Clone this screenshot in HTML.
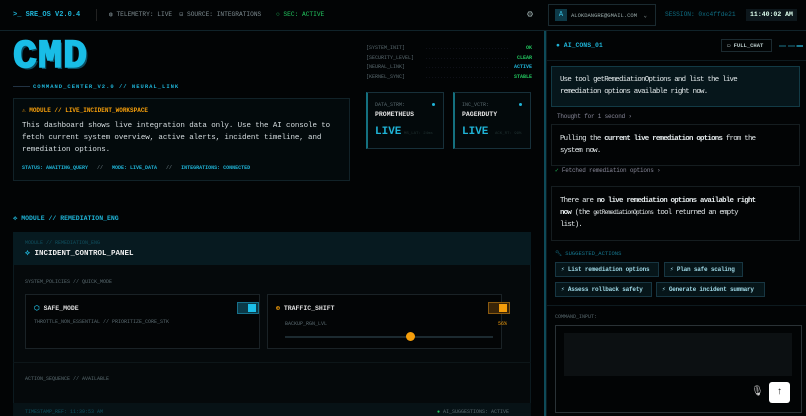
<!DOCTYPE html>
<html><head><meta charset="utf-8"><style>
*{box-sizing:border-box;margin:0;padding:0}
body{width:806px;height:416px;overflow:hidden;background:#020405;font-family:"Liberation Mono",monospace;color:#cfd8dc;position:relative}
.a{position:absolute;white-space:nowrap}
.t6{font-size:6px}.t5{font-size:5px}
.cy{color:#1fb3d6}.dim{color:#5a6a70}.gr{color:#22c55e}.or{color:#f59e0b}
.bx{position:absolute;border:1px solid #17303a}
.chip{position:absolute;height:15px;border:1px solid #173642;background:#061519;color:#9fd8e6;font-size:6px;letter-spacing:-0.2px;font-weight:bold;line-height:13px;padding-left:5px;white-space:nowrap}
.ct{font-size:7.4px;letter-spacing:-0.75px;line-height:12px;color:#e4eaec}
</style></head><body>
<!-- header -->
<div class="a" style="left:0;top:30px;width:806px;height:1px;background:#10232a"></div>
<div class="a cy" style="left:13px;top:11px;font-size:7px;font-weight:bold">&gt;_ SRE_OS V2.0.4</div>
<div class="a" style="left:96px;top:9px;width:1px;height:12px;background:#222"></div>
<div class="a dim" style="left:109px;top:11px;font-size:6.2px;color:#7d8b90">◍ TELEMETRY: LIVE &nbsp;⊟ SOURCE: INTEGRATIONS</div>
<div class="a gr" style="left:276px;top:11px;font-size:6.2px">○ SEC: ACTIVE</div>
<div class="a" style="left:527px;top:9px;font-size:10px;color:#9aa">⚙</div>
<div class="bx" style="left:548px;top:4px;width:108px;height:22px;border-color:#1a2a30"></div>
<div class="a" style="left:555px;top:9px;width:12px;height:12px;background:#0e3a48;color:#3cc8ea;font-size:7px;text-align:center;line-height:12px">A</div>
<div class="a" style="left:571px;top:12px;font-size:5.5px;color:#9aa">ALOKDANGRE@GMAIL.COM &nbsp;⌄</div>
<div class="a" style="left:665px;top:11px;font-size:6.2px;color:#0f6d82">SESSION: 0xc4ffde21</div>
<div class="a" style="left:746px;top:9px;width:51px;height:12px;background:#0d171c;color:#dfe;font-size:6.5px;font-weight:bold;text-align:center;line-height:12px">11:40:02 AM</div>
<!-- logo -->
<div class="a" style="left:13px;top:41px;font-size:40px;font-weight:bold;color:#19bde6;line-height:34px;text-shadow:2px 2px 0 #0b4d62;letter-spacing:1px;-webkit-text-stroke:1.6px #19bde6">CMD</div>
<div class="a" style="left:13px;top:86px;width:17px;height:1px;background:#234"></div>
<div class="a cy" style="left:33px;top:83px;font-size:5.5px;font-weight:bold;letter-spacing:1px">COMMAND_CENTER_V2.0 // NEURAL_LINK</div>
<!-- status list -->
<div class="a t5 dim" style="left:366px;top:44px;line-height:9.7px">[SYSTEM_INIT]<br>[SECURITY_LEVEL]<br>[NEURAL_LINK]<br>[KERNEL_SYNC]</div>
<div class="a t5" style="left:425px;top:44px;line-height:9.7px;color:#223">............................<br>............................<br>............................<br>............................</div>
<div class="a t5" style="left:480px;top:44px;width:52px;text-align:right;line-height:9.7px;font-weight:bold"><span class="gr">OK</span><br><span class="gr">CLEAR</span><br><span class="cy">ACTIVE</span><br><span class="gr">STABLE</span></div>
<!-- cards -->
<div class="bx" style="left:366px;top:92px;width:78px;height:57px;border-left:2px solid #14707f;background:#03090b"></div>
<div class="a t5 dim" style="left:375px;top:102px">DATA_STRM:</div>
<div class="a" style="left:432px;top:103px;width:3px;height:3px;background:#1fb3d6;border-radius:2px"></div>
<div class="a" style="left:375px;top:111px;font-size:6.5px;font-weight:bold;color:#e5e5e5">PROMETHEUS</div>
<div class="a cy" style="left:375px;top:126px;font-size:11px;font-weight:bold">LIVE</div>
<div class="a" style="left:404px;top:132px;font-size:4px;color:#233">MS_LAT: 24ms</div>
<div class="bx" style="left:453px;top:92px;width:78px;height:57px;border-left:2px solid #14707f;background:#03090b"></div>
<div class="a t5 dim" style="left:462px;top:102px">INC_VCTR:</div>
<div class="a" style="left:519px;top:103px;width:3px;height:3px;background:#1fb3d6;border-radius:2px"></div>
<div class="a" style="left:462px;top:111px;font-size:6.5px;font-weight:bold;color:#e5e5e5">PAGERDUTY</div>
<div class="a cy" style="left:462px;top:126px;font-size:11px;font-weight:bold">LIVE</div>
<div class="a" style="left:495px;top:132px;font-size:4px;color:#233">ACK_RT: 99%</div>
<!-- module box -->
<div class="bx" style="left:13px;top:98px;width:337px;height:83px;background:#030a0c;border-color:#112228"></div>
<div class="a or" style="left:22px;top:107px;font-size:6px;font-weight:bold">⚠ MODULE // LIVE_INCIDENT_WORKSPACE</div>
<div class="a" style="left:22px;top:120px;font-size:7.5px;letter-spacing:-0.1px;line-height:12px;color:#d6dde0">This dashboard shows live integration data only. Use the AI console to<br>fetch current system overview, active alerts, incident timeline, and<br>remediation options.</div>
<div class="a cy" style="left:22px;top:165px;font-size:5px;font-weight:bold">STATUS: AWAITING_QUERY &nbsp;&nbsp;<span class="dim">//</span>&nbsp;&nbsp; MODE: LIVE_DATA &nbsp;&nbsp;<span class="dim">//</span>&nbsp;&nbsp; INTEGRATIONS: CONNECTED</div>
<!-- remediation -->
<div class="a cy" style="left:13px;top:215px;font-size:6.5px;font-weight:bold">⟡ MODULE // REMEDIATION_ENG</div>
<div class="a" style="left:13px;top:232px;width:518px;height:184px;background:#05090b;border:1px solid #0c1a1f"></div>
<div class="a" style="left:13px;top:232px;width:518px;height:33px;background:#071a20"></div>
<div class="a" style="left:25px;top:240px;font-size:5px;color:#10505f">MODULE // REMEDIATION_ENG</div>
<div class="a" style="left:25px;top:249px;font-size:7.5px;font-weight:bold;color:#eee"><span class="cy">⟡</span> INCIDENT_CONTROL_PANEL</div>
<div class="a t5 dim" style="left:25px;top:279px">SYSTEM_POLICIES // QUICK_MODE</div>
<div class="bx" style="left:25px;top:294px;width:235px;height:55px;border-color:#1a2226;background:#030506"></div>
<div class="a" style="left:34px;top:304px;font-size:6.5px;font-weight:bold;color:#ddd"><span class="cy">⬡</span> SAFE_MODE</div>
<div class="a" style="left:237px;top:302px;width:22px;height:12px;background:#0b3a48;border:1px solid #17708a"></div>
<div class="a" style="left:248px;top:304px;width:8px;height:8px;background:#1cc0ea"></div>
<div class="a t5 dim" style="left:34px;top:319px">THROTTLE_NON_ESSENTIAL // PRIORITIZE_CORE_STK</div>
<div class="bx" style="left:267px;top:294px;width:235px;height:55px;border-color:#1a2226;background:#030506"></div>
<div class="a" style="left:276px;top:304px;font-size:6.5px;font-weight:bold;color:#ddd"><span class="or">⊕</span> TRAFFIC_SHIFT</div>
<div class="a" style="left:488px;top:302px;width:22px;height:12px;background:#3a2508;border:1px solid #8a5a10"></div>
<div class="a" style="left:499px;top:304px;width:8px;height:8px;background:#f59e0b"></div>
<div class="a t5 dim" style="left:285px;top:321px">BACKUP_RGN_LVL</div>
<div class="a t5 or" style="left:498px;top:321px">56%</div>
<div class="a" style="left:285px;top:336px;width:208px;height:2px;background:#1c2a30"></div>
<div class="a" style="left:406px;top:332px;width:9px;height:9px;border-radius:5px;background:#f59e0b"></div>
<div class="a" style="left:13px;top:362px;width:518px;height:1px;background:#0d1619"></div>
<div class="a t5 dim" style="left:25px;top:376px">ACTION_SEQUENCE // AVAILABLE</div>
<div class="a" style="left:13px;top:403px;width:518px;height:13px;background:#071216"></div>
<div class="a t5" style="left:25px;top:409px;color:#10505f">TIMESTAMP_REF: 11:39:53 AM</div>
<div class="a t5 dim" style="left:437px;top:409px"><span class="gr">●</span> AI_SUGGESTIONS: ACTIVE</div>
<!-- divider -->
<div class="a" style="left:544px;top:31px;width:2px;height:385px;background:#0e4a58"></div>
<div class="a" style="left:546px;top:31px;width:1px;height:385px;background:#0a1a1f"></div>
<!-- right panel -->
<div class="a" style="left:556px;top:42px;font-size:6.5px;font-weight:bold;color:#1fb3d6">● AI_CONS_01</div>
<div class="bx" style="left:721px;top:39px;width:51px;height:13px;border-color:#1b2a30;font-size:5.5px;color:#bcc;line-height:11px;padding-left:5px;font-weight:bold">▭ FULL_CHAT</div>
<div class="a" style="left:779px;top:45px;width:24px;height:2px;background:linear-gradient(90deg,#0f3d48 0 30%,transparent 30% 38%,#0f3d48 38% 66%,transparent 66% 72%,#1a7a90 72%)"></div>
<div class="a" style="left:546px;top:60px;width:260px;height:1px;background:#0d1a1f"></div>
<div class="bx" style="left:551px;top:66px;width:249px;height:41px;background:#06161b;border-color:#123a45"></div>
<div class="a ct" style="left:560px;top:74px">Use tool getRemediationOptions and list the live<br>remediation options available right now.</div>
<div class="a" style="left:557px;top:113px;font-size:6px;letter-spacing:-0.2px;color:#889">Thought for 1 second ›</div>
<div class="bx" style="left:551px;top:124px;width:249px;height:42px;border-color:#151d20"></div>
<div class="a ct" style="left:560px;top:133px">Pulling the <b>current live remediation options</b> from the<br>system now.</div>
<div class="a" style="left:555px;top:167px;font-size:6px;letter-spacing:-0.2px;color:#889"><span class="gr">✓</span> Fetched remediation options ›</div>
<div class="bx" style="left:551px;top:186px;width:249px;height:55px;border-color:#151d20"></div>
<div class="a ct" style="left:560px;top:195px">There are <b>no live remediation options available right<br>now</b> (the  <span style="font-size:6px">getRemediationOptions</span>  tool returned an empty<br>list).</div>
<div class="a cy" style="left:555px;top:250px;font-size:5.5px;color:#167890">🔧︎ SUGGESTED_ACTIONS</div>
<div class="chip" style="left:555px;top:262px;width:104px">⚡ List remediation options</div>
<div class="chip" style="left:664px;top:262px;width:79px">⚡ Plan safe scaling</div>
<div class="chip" style="left:555px;top:282px;width:97px">⚡ Assess rollback safety</div>
<div class="chip" style="left:656px;top:282px;width:109px">⚡ Generate incident summary</div>
<div class="a" style="left:546px;top:305px;width:260px;height:1px;background:#0d1a1f"></div>
<div class="a t5 dim" style="left:555px;top:314px">COMMAND_INPUT:</div>
<div class="bx" style="left:555px;top:325px;width:247px;height:88px;border-color:#2a3236"></div>
<div class="a" style="left:564px;top:333px;width:228px;height:43px;background:#0c1012"></div>
<div class="a" style="left:751px;top:386px;font-size:10px;color:#ccc">🎙︎</div>
<div class="a" style="left:769px;top:382px;width:21px;height:21px;background:#fff;border-radius:3px;color:#111;font-size:10px;text-align:center;line-height:21px">↑</div>
</body></html>
